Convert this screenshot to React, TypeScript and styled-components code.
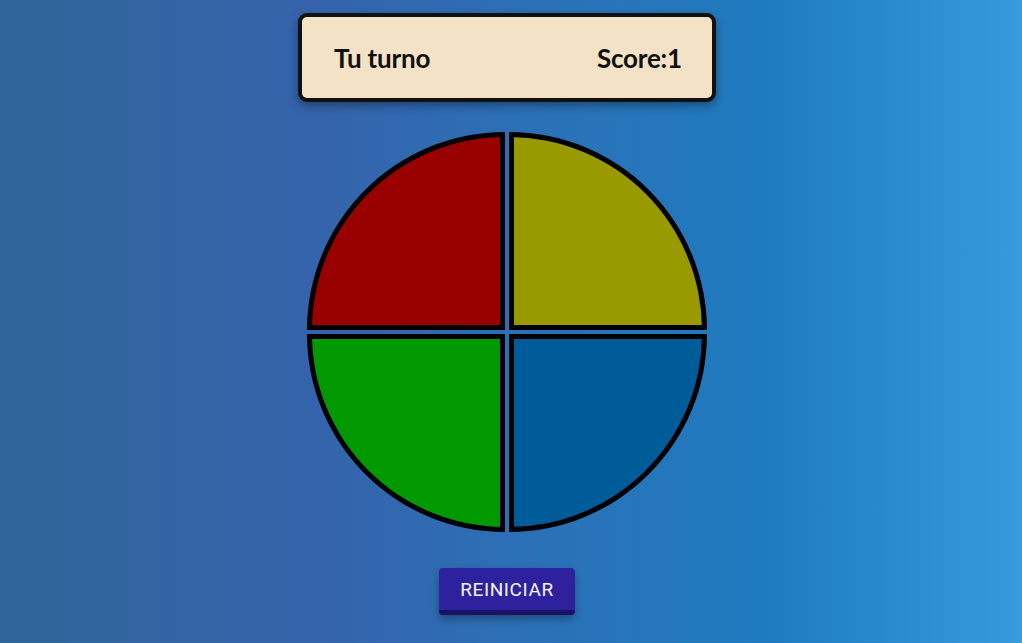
import styled, { createGlobalStyle } from "styled-components";

const GlobalStyle = createGlobalStyle`
  html, body {
    margin: 0;
    height: 100%;
  }
  body {
    background: linear-gradient(to right, #2f6699 0%, #3563ab 30%, #2a72b8 55%, #1f7bbf 75%, #379ade 100%);
    font-family: Lato, "Open Sans", sans-serif;
  }
`;

const Page = styled.div`
  min-height: 643px;
  display: flex;
  flex-direction: column;
  align-items: center;
  padding-right: 8px;
  padding-top: 13px;
  box-sizing: border-box;
`;

const Scoreboard = styled.div`
  width: 418px;
  height: 89px;
  box-sizing: border-box;
  background: #f3e2c6;
  border: 4px solid #111;
  border-radius: 9px;
  box-shadow: 0 4px 10px rgba(0, 0, 0, 0.35);
  display: flex;
  align-items: center;
  justify-content: space-between;
  padding: 0 30px 0 32px;
  font-size: 26px;
  font-weight: 700;
  letter-spacing: -0.2px;
  color: #111;
`;

const Board = styled.div`
  margin-top: 30px;
  width: 400px;
  height: 400px;
  display: grid;
  grid-template-columns: 198px 198px;
  grid-template-rows: 198px 198px;
  gap: 4px;
`;

const Pad = styled.div<{ $color: string; $corner: string }>`
  background: ${(p) => p.$color};
  border: 5px solid #000;
  box-sizing: border-box;
  ${(p) => `border-${p.$corner}-radius: 100%;`}
  cursor: pointer;
`;

const ResetButton = styled.button`
  margin-top: 36px;
  width: 136px;
  height: 47px;
  background: #2d219e;
  color: #f4f4ff;
  border: none;
  border-bottom: 5px solid #1b1266;
  border-radius: 4px;
  font-family: Roboto, "Liberation Sans", sans-serif;
  font-size: 19px;
  letter-spacing: 0.6px;
  box-shadow: 0 4px 8px rgba(0, 0, 0, 0.3);
  cursor: pointer;
`;

export default function App() {
  return (
    <>
      <GlobalStyle />
      <Page>
        <Scoreboard>
          <span>Tu turno</span>
          <span>Score:1</span>
        </Scoreboard>
        <Board>
          <Pad $color="#990000" $corner="top-left" />
          <Pad $color="#999900" $corner="top-right" />
          <Pad $color="#009900" $corner="bottom-left" />
          <Pad $color="#005b99" $corner="bottom-right" />
        </Board>
        <ResetButton>REINICIAR</ResetButton>
      </Page>
    </>
  );
}
